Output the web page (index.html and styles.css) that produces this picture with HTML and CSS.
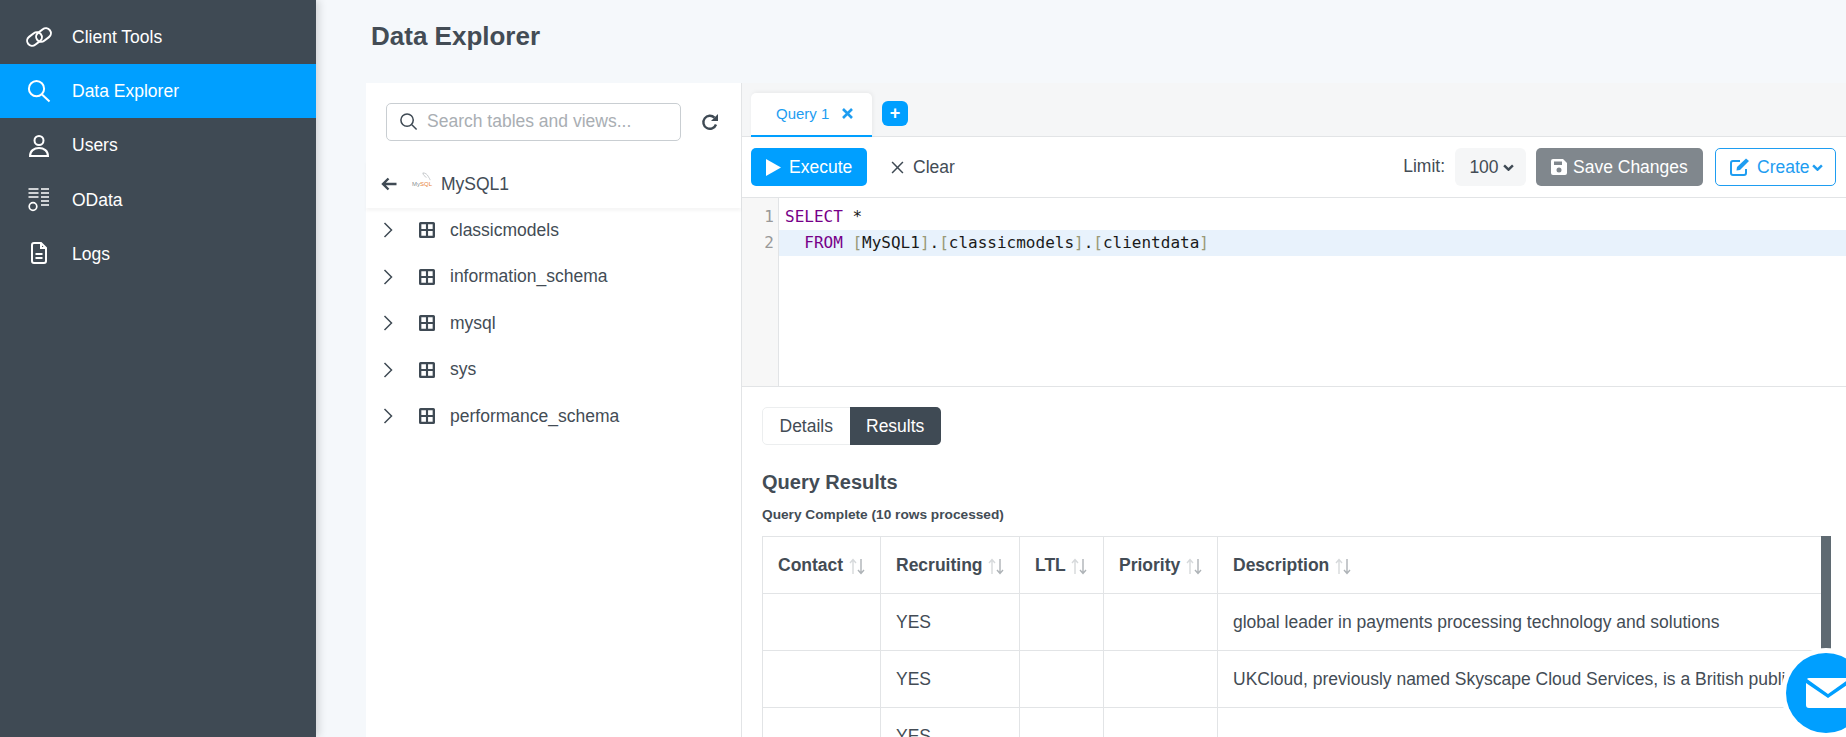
FILE: index.html
```html
<!DOCTYPE html>
<html lang="en">
<head>
    <meta charset="utf-8">
    <title>Data Explorer</title>
    <link rel="stylesheet" href="styles.css">
</head>
<body>
<div class="app">
    <nav class="sidebar">
        <a class="nav-item" href="#">
            <svg class="nav-icon" viewBox="0 0 28 26" fill="none" stroke="#fff" stroke-width="2"><rect x="1.500" y="10" width="16" height="10" rx="5" transform="rotate(-38 9.500 15)"/><rect x="10.500" y="6" width="16" height="10" rx="5" transform="rotate(-38 18.500 11)"/></svg>
            <span>Client Tools</span>
        </a>
        <a class="nav-item active" href="#">
            <svg class="nav-icon" viewBox="0 0 28 26" fill="none" stroke="#fff" stroke-width="2"><circle cx="11.500" cy="10.700" r="7.600"/><path d="M17 16.500l7.500 7"/></svg>
            <span>Data Explorer</span>
        </a>
        <a class="nav-item" href="#">
            <svg class="nav-icon" viewBox="0 0 28 26" fill="none" stroke="#fff" stroke-width="2"><circle cx="14" cy="8.500" r="4.500"/><path d="M5 24c0-5 4-8 9-8s9 3 9 8z"/></svg>
            <span>Users</span>
        </a>
        <a class="nav-item nav-odata" href="#">
            <svg class="nav-icon" viewBox="0 0 28 26" fill="none" stroke="#fff" stroke-width="1.700"><path d="M3.500 2h10M3.500 6h10M3.500 10h10M16 2h8M16 6h8M16 10h8M16 14h8M16 18h8"/><circle cx="8" cy="19.500" r="3.800"/></svg>
            <span>OData</span>
        </a>
        <a class="nav-item" href="#">
            <svg class="nav-icon" viewBox="0 0 28 26" fill="none" stroke="#fff" stroke-width="2"><path d="M9 2h7l5 5v13a2 2 0 0 1-2 2H9a2 2 0 0 1-2-2V4a2 2 0 0 1 2-2z"/><path d="M16 2v5h5"/><path d="M10.500 13h7M10.500 17h7"/></svg>
            <span>Logs</span>
        </a>
    </nav>

    <main class="content">
        <h1 class="page-title">Data Explorer</h1>
        <div class="explorer">
            <aside class="tree">
                <div class="tree-search">
                    <div class="search-box">
                        <svg class="search-icon" viewBox="0 0 20 20" fill="none" stroke="#3f4a54" stroke-width="1.600"><circle cx="8.500" cy="8.500" r="6.500"/><path d="M13.500 13.500l5 5"/></svg>
                        <span class="search-text">Search tables and views...</span>
                    </div>
                    <svg class="refresh" viewBox="0 0 18 18" fill="none" stroke="#3f4a54" stroke-width="2.400"><path d="M15 11.500a6.500 6.500 0 1 1-1.500-6.800"/><path d="M17 1v7h-7z" fill="#3f4a54" stroke="none"/></svg>
                </div>
                <div class="tree-head">
                    <svg class="back" viewBox="0 0 16 14" fill="none" stroke="#3f4a54" stroke-width="2.400"><path d="M15.500 7H2M7.500 1.500L2 7l5.500 5.500"/></svg>
                    <span class="mysql-logo">
                        <svg class="dolphin" viewBox="0 0 10 10" fill="none" stroke="#9aa0a5" stroke-width=".6"><path d="M1 1c3 0 5 2 6 4s2 3 2 4M1 1c0 2 2 4 4 5"/></svg>
                        <span class="my">My</span><span class="sql">SQL</span>
                    </span>
                    <span>MySQL1</span>
                </div>
                <ul class="tree-list">
                    <li>
                        <svg class="chevron" viewBox="0 0 10 16" fill="none" stroke="#3f4a54" stroke-width="1.500"><path d="M1.500 1l7 7-7 7"/></svg>
                        <svg class="grid-icon" viewBox="0 0 15 15"><path fill="#3f4a54" d="M1.500 0h12A1.500 1.500 0 0 1 15 1.500v12a1.500 1.500 0 0 1-1.500 1.500h-12A1.500 1.500 0 0 1 0 13.500v-12A1.500 1.500 0 0 1 1.500 0zM2.200 2.200v4.300h4.300V2.200zm6.300 0v4.300h4.300V2.200zM2.200 8.500v4.300h4.300V8.500zm6.300 0v4.300h4.300V8.500z" fill-rule="evenodd"/></svg>
                        <span>classicmodels</span>
                    </li>
                    <li>
                        <svg class="chevron" viewBox="0 0 10 16" fill="none" stroke="#3f4a54" stroke-width="1.500"><path d="M1.500 1l7 7-7 7"/></svg>
                        <svg class="grid-icon" viewBox="0 0 15 15"><path fill="#3f4a54" d="M1.500 0h12A1.500 1.500 0 0 1 15 1.500v12a1.500 1.500 0 0 1-1.500 1.500h-12A1.500 1.500 0 0 1 0 13.500v-12A1.500 1.500 0 0 1 1.500 0zM2.200 2.200v4.300h4.300V2.200zm6.300 0v4.300h4.300V2.200zM2.200 8.500v4.300h4.300V8.500zm6.300 0v4.300h4.300V8.500z" fill-rule="evenodd"/></svg>
                        <span>information_schema</span>
                    </li>
                    <li>
                        <svg class="chevron" viewBox="0 0 10 16" fill="none" stroke="#3f4a54" stroke-width="1.500"><path d="M1.500 1l7 7-7 7"/></svg>
                        <svg class="grid-icon" viewBox="0 0 15 15"><path fill="#3f4a54" d="M1.500 0h12A1.500 1.500 0 0 1 15 1.500v12a1.500 1.500 0 0 1-1.500 1.500h-12A1.500 1.500 0 0 1 0 13.500v-12A1.500 1.500 0 0 1 1.500 0zM2.200 2.200v4.300h4.300V2.200zm6.300 0v4.300h4.300V2.200zM2.200 8.500v4.300h4.300V8.500zm6.300 0v4.300h4.300V8.500z" fill-rule="evenodd"/></svg>
                        <span>mysql</span>
                    </li>
                    <li>
                        <svg class="chevron" viewBox="0 0 10 16" fill="none" stroke="#3f4a54" stroke-width="1.500"><path d="M1.500 1l7 7-7 7"/></svg>
                        <svg class="grid-icon" viewBox="0 0 15 15"><path fill="#3f4a54" d="M1.500 0h12A1.500 1.500 0 0 1 15 1.500v12a1.500 1.500 0 0 1-1.500 1.500h-12A1.500 1.500 0 0 1 0 13.500v-12A1.500 1.500 0 0 1 1.500 0zM2.200 2.200v4.300h4.300V2.200zm6.300 0v4.300h4.300V2.200zM2.200 8.500v4.300h4.300V8.500zm6.300 0v4.300h4.300V8.500z" fill-rule="evenodd"/></svg>
                        <span>sys</span>
                    </li>
                    <li>
                        <svg class="chevron" viewBox="0 0 10 16" fill="none" stroke="#3f4a54" stroke-width="1.500"><path d="M1.500 1l7 7-7 7"/></svg>
                        <svg class="grid-icon" viewBox="0 0 15 15"><path fill="#3f4a54" d="M1.500 0h12A1.500 1.500 0 0 1 15 1.500v12a1.500 1.500 0 0 1-1.500 1.500h-12A1.500 1.500 0 0 1 0 13.500v-12A1.500 1.500 0 0 1 1.500 0zM2.200 2.200v4.300h4.300V2.200zm6.300 0v4.300h4.300V2.200zM2.200 8.500v4.300h4.300V8.500zm6.300 0v4.300h4.300V8.500z" fill-rule="evenodd"/></svg>
                        <span>performance_schema</span>
                    </li>
                </ul>
            </aside>

            <section class="workspace">
                <div class="tabs">
                    <div class="tab">
                        <span>Query 1</span>
                        <svg class="tab-close" viewBox="0 0 11 11" fill="none" stroke="#1e9df1" stroke-width="2.600"><path d="M1 1l9 9M10 1l-9 9"/></svg>
                    </div>
                    <div class="tab-add">+</div>
                </div>
                <div class="toolbar">
                    <button class="btn btn-primary">
                        <svg class="play" viewBox="0 0 15 17"><path fill="#fff" d="M0 0l15 8.500L0 17z"/></svg>
                        Execute
                    </button>
                    <button class="btn btn-clear">
                        <svg class="x-icon" viewBox="0 0 12 12" fill="none" stroke="#3f4a54" stroke-width="1.400"><path d="M1 1l10 10M11 1L1 11"/></svg>
                        Clear
                    </button>
                    <span class="limit-label">Limit:</span>
                    <div class="limit-select">100<svg class="caret" viewBox="0 0 10 6" fill="none" stroke="#3f4a54" stroke-width="2.200"><path d="M1 1l4 4 4-4"/></svg></div>
                    <button class="btn btn-save">
                        <svg class="save-icon" viewBox="0 0 16 16"><path fill="#fff" fill-rule="evenodd" d="M2 0h10l4 4v10a2 2 0 0 1-2 2H2a2 2 0 0 1-2-2V2a2 2 0 0 1 2-2zm1 2.500v3.500h8V2.500zM8 8.500a2.500 2.500 0 1 0 0 5 2.500 2.500 0 0 0 0-5z"/></svg>
                        Save Changes
                    </button>
                    <button class="btn btn-create">
                        <svg class="edit-icon" viewBox="0 0 20 18" fill="none" stroke="#1e9df1" stroke-width="2"><path d="M16 11v4a2 2 0 0 1-2 2H3a2 2 0 0 1-2-2V5a2 2 0 0 1 2-2h7"/><path d="M7 9l-.5 3.500L10 12l9-9-3-2.500z" fill="#1e9df1" stroke="none"/></svg>
                        Create<svg class="caret" viewBox="0 0 10 6" fill="none" stroke="#1e9df1" stroke-width="2.200"><path d="M1 1l4 4 4-4"/></svg>
                    </button>
                </div>
                <div class="editor">
                    <div class="gutter"><div>1</div><div>2</div></div>
                    <div class="code">
                        <div class="code-line"><span class="kw">SELECT</span> *</div>
                        <div class="code-line current">  <span class="kw">FROM</span> <span class="br">[</span>MySQL1<span class="br">]</span>.<span class="br">[</span>classicmodels<span class="br">]</span>.<span class="br">[</span>clientdata<span class="br">]</span></div>
                    </div>
                </div>
                <div class="results">
                    <div class="toggle">
                        <span class="toggle-item">Details</span>
                        <span class="toggle-item on">Results</span>
                    </div>
                    <h2 class="results-title">Query Results</h2>
                    <p class="results-note">Query Complete (10 rows processed)</p>
                    <div class="table-wrap">
                        <table class="grid">
                            <thead>
                                <tr>
                                    <th class="c-contact">Contact <svg class="sort" viewBox="0 0 18 17" fill="none"><path stroke="#d6d9db" stroke-width="1.400" d="M5 16V2M2 5l3-3.500L8 5"/><path stroke="#aeb3b7" stroke-width="1.400" d="M13 1v14M10 12l3 3.500 3-3.500"/></svg></th>
                                    <th class="c-recruit">Recruiting <svg class="sort" viewBox="0 0 18 17" fill="none"><path stroke="#d6d9db" stroke-width="1.400" d="M5 16V2M2 5l3-3.500L8 5"/><path stroke="#aeb3b7" stroke-width="1.400" d="M13 1v14M10 12l3 3.500 3-3.500"/></svg></th>
                                    <th class="c-ltl">LTL <svg class="sort" viewBox="0 0 18 17" fill="none"><path stroke="#d6d9db" stroke-width="1.400" d="M5 16V2M2 5l3-3.500L8 5"/><path stroke="#aeb3b7" stroke-width="1.400" d="M13 1v14M10 12l3 3.500 3-3.500"/></svg></th>
                                    <th class="c-prio">Priority <svg class="sort" viewBox="0 0 18 17" fill="none"><path stroke="#d6d9db" stroke-width="1.400" d="M5 16V2M2 5l3-3.500L8 5"/><path stroke="#aeb3b7" stroke-width="1.400" d="M13 1v14M10 12l3 3.500 3-3.500"/></svg></th>
                                    <th>Description <svg class="sort" viewBox="0 0 18 17" fill="none"><path stroke="#d6d9db" stroke-width="1.400" d="M5 16V2M2 5l3-3.500L8 5"/><path stroke="#aeb3b7" stroke-width="1.400" d="M13 1v14M10 12l3 3.500 3-3.500"/></svg></th>
                                </tr>
                            </thead>
                            <tbody>
                                <tr><td></td><td>YES</td><td></td><td></td><td>global leader in payments processing technology and solutions</td></tr>
                                <tr><td></td><td>YES</td><td></td><td></td><td>UKCloud, previously named Skyscape Cloud Services, is a British public</td></tr>
                                <tr><td></td><td>YES</td><td></td><td></td><td></td></tr>
                            </tbody>
                        </table>
                        <div class="scroll-thumb"></div>
                    </div>
                </div>
            </section>
        </div>
    </main>
</div>
<div class="chat-bubble">
    <svg class="mail" viewBox="0 0 44 30"><path fill="#fff" d="M3 0h38a3 3 0 0 1 2 1L22 16 1 1a3 3 0 0 1 2-1zM0 5l22 15L44 5v22a3 3 0 0 1-3 3H3a3 3 0 0 1-3-3z"/></svg>
</div>
</body>
</html>
```

FILE: styles.css
```css
* {
    margin: 0;
    padding: 0;
    box-sizing: border-box;
}
html, body {
    height: 100%;
    overflow: hidden;
}
body {
    font-family: "Liberation Sans", Arial, sans-serif;
    font-size: 17.5px;
    color: #434c55;
    background: #f5f8fb;
}
.app {
    display: flex;
    height: 737px;
}

/* sidebar */
.sidebar {
    width: 316px;
    flex: none;
    background: #3f4a54;
    box-shadow: 3px 0 8px rgba(0,0,0,.15);
    padding-top: 10px;
}
.nav-item {
    display: flex;
    align-items: center;
    height: 54px;
    color: #fff;
    text-decoration: none;
}
.nav-item.active {
    background: #009fff;
}
.nav-odata {
    margin-top: 1px;
}
.nav-icon {
    width: 28px;
    height: 26px;
    margin-left: 25px;
    margin-right: 19px;
}

/* main */
.content {
    flex: 1;
    min-width: 0;
    padding-left: 50px;
}
.page-title {
    font-size: 26px;
    font-weight: bold;
    line-height: 30px;
    padding: 21px 0 0 5px;
    height: 83px;
    color: #434c55;
}
.explorer {
    display: flex;
    height: 654px;
}
.tree {
    width: 376px;
    flex: none;
    background: #fff;
    border-right: 1px solid #e2e4e6;
}
.tree-search {
    display: flex;
    align-items: center;
    height: 77px;
    padding: 0 20px;
}
.search-box {
    display: flex;
    align-items: center;
    width: 295px;
    height: 38px;
    border: 1px solid #c9ced2;
    border-radius: 5px;
    padding-left: 12px;
}
.search-icon {
    width: 19px;
    height: 19px;
    margin-right: 9px;
}
.search-text {
    color: #a9aeb3;
}
.refresh {
    width: 18px;
    height: 18px;
    margin-left: 20px;
}
.tree-head {
    display: flex;
    align-items: center;
    height: 48px;
    padding-left: 15px;
    box-shadow: 0 3px 3px rgba(0,0,0,.04);
}
.back {
    width: 16px;
    height: 14px;
    margin-right: 15px;
}
.mysql-logo {
    position: relative;
    width: 29px;
    font-size: 6px;
}
.dolphin {
    position: absolute;
    left: 10px;
    top: -9px;
    width: 9px;
    height: 9px;
}
.mysql-logo .my {
    color: #8a8f94;
}
.mysql-logo .sql {
    color: #e8833a;
}
.tree-list {
    list-style: none;
    margin-top: -1px;
}
.tree-list li {
    display: flex;
    align-items: center;
    height: 46.500px;
}
.chevron {
    width: 10px;
    height: 16px;
    margin-left: 17px;
}
.grid-icon {
    width: 16px;
    height: 16px;
    margin-left: 26px;
    margin-right: 15px;
}

/* workspace */
.workspace {
    flex: 1;
    min-width: 0;
    background: #fff;
}
.tabs {
    display: flex;
    align-items: center;
    height: 54px;
    background: #f5f6f7;
    border-bottom: 1px solid #e2e4e6;
    padding-left: 9px;
}
.tab {
    display: flex;
    align-items: center;
    gap: 13px;
    width: 121px;
    height: 44px;
    margin-top: 10px;
    padding-left: 25px;
    background: #fff;
    border-bottom: 2px solid #009fff;
    border-radius: 5px 5px 0 0;
    color: #1e9df1;
    font-size: 15px;
    box-shadow: 1px -1px 4px rgba(0,0,0,.06);
}
.tab-close {
    width: 11px;
    height: 11px;
}
.tab-add {
    width: 26px;
    height: 25px;
    margin-left: 10px;
    margin-top: 8px;
    border-radius: 6px;
    background: #009fff;
    color: #fff;
    font-size: 18px;
    font-weight: bold;
    line-height: 24px;
    text-align: center;
}
.toolbar {
    display: flex;
    align-items: center;
    height: 61px;
    padding: 0 10px 0 9px;
    border-bottom: 1px solid #e2e4e6;
}
.btn {
    display: flex;
    align-items: center;
    height: 38px;
    border: 1px solid transparent;
    border-radius: 5px;
    background: none;
    font-family: inherit;
    font-size: 17.500px;
}
.btn-primary {
    width: 116px;
    padding-left: 14px;
    background: #009fff;
    color: #fff;
    gap: 8px;
}
.play {
    width: 15px;
    height: 17px;
}
.btn-clear {
    margin-left: 14px;
    padding-left: 9px;
    color: #434c55;
    gap: 9px;
}
.x-icon {
    width: 13px;
    height: 13px;
}
.limit-label {
    margin-left: auto;
    margin-bottom: 2px;
}
.limit-select {
    display: flex;
    align-items: center;
    justify-content: center;
    gap: 4px;
    width: 71px;
    height: 38px;
    margin-left: 10px;
    padding-left: 2px;
    border-radius: 6px;
    background: #f5f6f7;
}
.caret {
    width: 11px;
    height: 7px;
}
.btn-save {
    width: 167px;
    margin-left: 10px;
    padding-left: 14px;
    gap: 6px;
    background: #80878d;
    color: #fff;
}
.save-icon {
    width: 16px;
    height: 16px;
}
.btn-create {
    width: 121px;
    margin-left: 12px;
    padding-left: 14px;
    border-color: #1e9df1;
    color: #1e9df1;
}
.edit-icon {
    width: 20px;
    height: 18px;
    margin-right: 7px;
}
.btn-create .caret {
    margin-left: 2px;
}
.editor {
    display: flex;
    height: 189px;
    border-bottom: 1px solid #e2e4e6;
    font-family: "DejaVu Sans Mono", monospace;
    font-size: 16px;
    line-height: 26px;
}
.gutter {
    width: 37px;
    flex: none;
    padding-top: 6px;
    padding-right: 4px;
    text-align: right;
    background: #f7f7f7;
    border-right: 1px solid #e2e4e6;
    color: #999;
}
.code {
    flex: 1;
    padding-top: 6px;
    color: #1a1a1a;
}
.code-line {
    padding-left: 6px;
    white-space: pre;
}
.code-line.current {
    background: #e8f2fc;
}
.kw {
    color: #770088;
}
.br {
    color: #999977;
}

/* results */
.results {
    padding: 20px 0 0 20px;
}
.toggle {
    display: inline-flex;
    height: 38px;
    border: 1px solid #eceeef;
    border-radius: 5px;
    vertical-align: top;
}
.toggle-item {
    display: flex;
    align-items: center;
    padding: 0 16.500px;
}
.toggle-item.on {
    background: #3f4a54;
    color: #fff;
    border-radius: 0 5px 5px 0;
    margin: -1px -1px -1px 0;
}
.results-title {
    margin-top: 25px;
    font-size: 20px;
    line-height: 24px;
}
.results-note {
    margin-top: 13px;
    font-size: 13.700px;
    font-weight: bold;
    line-height: 16px;
}
.table-wrap {
    position: relative;
    width: 1069px;
    margin-top: 13px;
    overflow: hidden;
}
.grid {
    width: 1082px;
    border-collapse: collapse;
    table-layout: fixed;
}
.grid th, .grid td {
    height: 57px;
    padding: 0 15px;
    border: 1px solid #e2e4e6;
    text-align: left;
    white-space: nowrap;
    overflow: hidden;
}
.c-contact { width: 118px; }
.c-recruit { width: 139px; }
.c-ltl { width: 84px; }
.c-prio { width: 114px; }
.sort {
    width: 18px;
    height: 17px;
    vertical-align: -4px;
}
.scroll-thumb {
    position: absolute;
    left: 1059px;
    top: 0;
    width: 10px;
    height: 115px;
    background: #5f6a72;
}
.chat-bubble {
    position: fixed;
    left: 1786px;
    top: 653px;
    width: 80px;
    height: 80px;
    border-radius: 50%;
    background: #009fff;
    box-shadow: 0 0 0 5px #fff;
}
.mail {
    position: absolute;
    left: 20px;
    top: 25px;
    width: 44px;
    height: 30px;
}
```
